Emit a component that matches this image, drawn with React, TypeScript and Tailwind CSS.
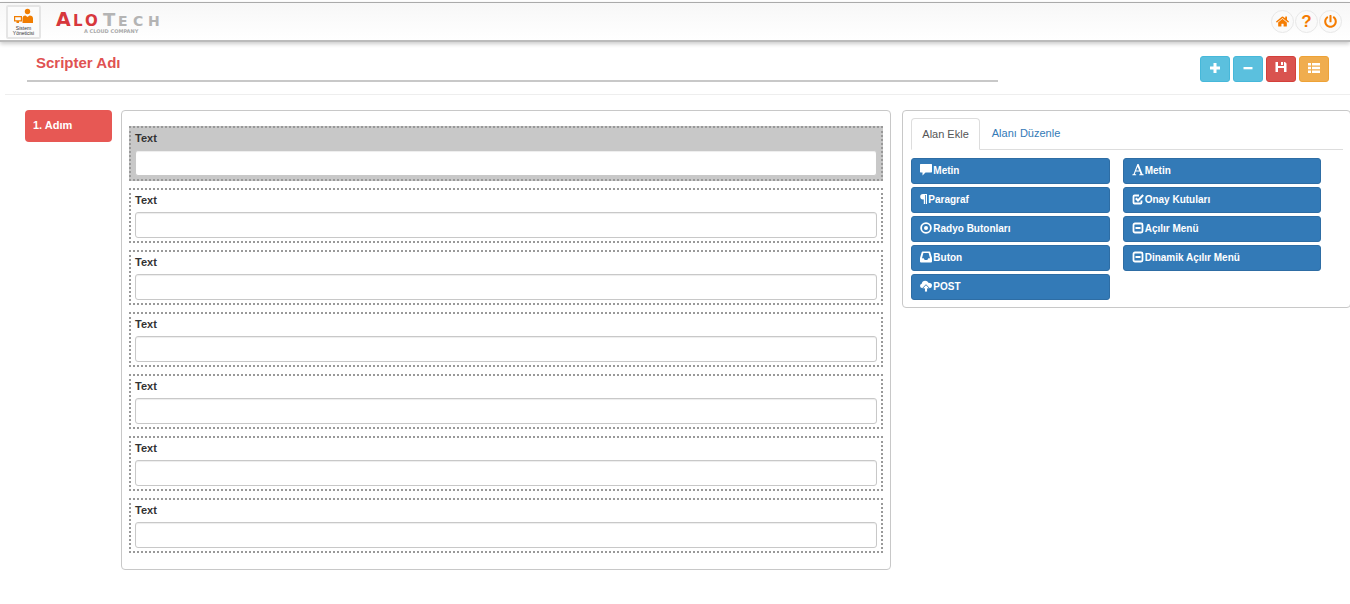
import type { ReactNode } from "react";
import { FaHome, FaPowerOff } from "react-icons/fa";

const fields = ["f1", "f2", "f3", "f4", "f5", "f6", "f7"];

function Icon({ children, className = "h-3 w-3", viewBox = "0 0 12 12" }: { children: ReactNode; className?: string; viewBox?: string }) {
  return (
    <svg viewBox={viewBox} className={`shrink-0 ${className}`} fill="currentColor" aria-hidden="true">
      {children}
    </svg>
  );
}

const CommentIcon = () => (
  <Icon>
    <path d="M.6 0h10.800q.6 0 .6.6v7.200q0 .6-.6.6H5.500L2.500 11.500V8.400H.6Q0 8.400 0 7.800V.6Q0 0 .6 0z" />
  </Icon>
);
const FontIcon = () => (
  <Icon>
    <path d="M5.400 0h1.200l3.900 10 1.200.4v.9H7.200v-.9l1.300-.4-.8-2.400H3.700l-.9 2.400 1.400.4v.9H.3v-.9l1.300-.4zM5.600 2.800 4.100 6.500h3.100z" />
  </Icon>
);
const CheckIcon = () => (
  <Icon>
    <path d="M9.500 7.500v2q0 1-1 1h-6q-1 0-1-1v-6q0-1 1-1h4.500" fill="none" stroke="currentColor" strokeWidth="1.800" />
    <path d="m3.800 5.200 2.200 2.300 5.200-5.500" fill="none" stroke="currentColor" strokeWidth="2" />
  </Icon>
);
const RadioIcon = () => (
  <Icon>
    <circle cx="6" cy="6" r="4.900" fill="none" stroke="currentColor" strokeWidth="1.800" />
    <circle cx="6" cy="6" r="2" />
  </Icon>
);
const CollapseIcon = () => (
  <Icon>
    <rect x="1.500" y="1.500" width="9" height="9" rx="1.500" fill="none" stroke="currentColor" strokeWidth="1.800" />
    <path d="M3.500 5h5v2h-5z" />
  </Icon>
);
const InboxIcon = () => (
  <Icon>
    <path fillRule="evenodd" d="M2.600.5h6.800q.7 0 .9.700L12 7v3.500q0 1-1 1H1q-1 0-1-1V7l1.700-5.800q.2-.7.900-.7zM3.400 2 2 7.200h1.700l1 1.900h2.600l1-1.900H10L8.600 2z" />
  </Icon>
);
const UploadIcon = () => (
  <Icon>
    <path d="M2.600 8.300Q0 8.100 0 6q0-1.800 1.700-2.200Q2.200.8 5.200.8q2.300 0 3.200 2Q12 2.800 12 5.600q0 2.400-2.500 2.700z" />
    <path d="M6 4.700 9.800 8.700H7.500V12h-3V8.700H2.200z" stroke="#337ab7" strokeWidth=".9" />
  </Icon>
);
const ParagraphIcon = () => (
  <Icon viewBox="0 0 7 12" className="h-3 w-[7px]">
    <path d="M3 1h4v10H5.800V2H5v9H3.800V6.500H3Q.2 6.200.2 3.700T3 1z" />
  </Icon>
);

type Item = { label: string; icon: ReactNode };
const leftItems: Item[] = [
  { label: "Metin", icon: <CommentIcon /> },
  { label: "Paragraf", icon: <ParagraphIcon /> },
  { label: "Radyo Butonları", icon: <RadioIcon /> },
  { label: "Buton", icon: <InboxIcon /> },
  { label: "POST", icon: <UploadIcon /> },
];
const rightItems: Item[] = [
  { label: "Metin", icon: <FontIcon /> },
  { label: "Onay Kutuları", icon: <CheckIcon /> },
  { label: "Açılır Menü", icon: <CollapseIcon /> },
  { label: "Dinamik Açılır Menü", icon: <CollapseIcon /> },
];

function ItemColumn({ items }: { items: Item[] }) {
  return (
    <div className="flex flex-1 flex-col gap-[3px]">
      {items.map((item) => (
        <button
          key={item.label}
          type="button"
          className="flex h-[26px] items-center gap-px rounded-[3px] border border-[#2e6da4] bg-[#337ab7] px-2 pb-[2px] text-[10px] font-bold text-white"
        >
          {item.icon}
          {item.label}
        </button>
      ))}
    </div>
  );
}

function RoundLink({ label, children }: { label: string; children: ReactNode }) {
  return (
    <a
      href="#"
      aria-label={label}
      className="flex h-[23px] w-[23px] items-center justify-center rounded-full border border-[#e8e8e8] bg-[#fafafa] text-[#f57c00]"
    >
      {children}
    </a>
  );
}

function Tool({ label, className, children }: { label: string; className: string; children: ReactNode }) {
  return (
    <button
      type="button"
      aria-label={label}
      className={`flex h-[26px] w-[30px] items-center justify-center rounded-[3px] border pb-[2px] text-white ${className}`}
    >
      {children}
    </button>
  );
}

function Brand() {
  return (
    <a href="#" aria-label="AloTech" className="ml-[15px] block">
      <svg viewBox="0 0 110 28" className="h-7 w-[110px] overflow-visible" fontFamily="DejaVu Sans, sans-serif" aria-hidden="true">
        <g fill="#d7373c" fontWeight="bold">
          <text x="0" y="18" fontSize="19">A</text>
          <text x="17" y="18" fontSize="15">L</text>
          <text x="29" y="18" fontSize="15">O</text>
        </g>
        <g fill="#b4b4b4" fontWeight="bold">
          <text x="47" y="18" fontSize="18">T</text>
          <text x="62" y="18" fontSize="14">E</text>
          <text x="77" y="18" fontSize="14">C</text>
          <text x="92" y="18" fontSize="14">H</text>
        </g>
        <text x="28" y="25" fontSize="5" fill="#aaa" fontFamily="DejaVu Sans, sans-serif" fontWeight="bold">A CLOUD COMPANY</text>
      </svg>
    </a>
  );
}

export default function App() {
  return (
    <div className="overflow-x-hidden bg-white pt-[2px] font-['Liberation_Sans',Arial,sans-serif] text-[11px] text-[#333]">
      <header className="flex h-10 items-center border-t border-b-2 border-t-[#aaa] border-b-[#bbb] bg-linear-to-b from-[#f7f7f7] to-white pr-2 pl-[6px] shadow-[0_2px_4px_#ccc]">
        <a
          href="#"
          className="flex h-[34px] w-[35px] flex-col items-center rounded-[2px] border-2 border-[#e5e5e5] bg-[#fbfbfb] pt-px text-center text-[5px] leading-[5px]"
        >
          <svg viewBox="0 0 20 16" className="h-4 w-5 shrink-0" fill="#f07d00" aria-hidden="true">
            <circle cx="13.500" cy="3.500" r="2.700" />
            <path d="M8.500 15v-4.500q0-3 3-3l2 1.500 2-1.500q3.500 0 3.500 3V15z" />
            <path fillRule="evenodd" d="M0 8h8v5.500H5V15H2.500v-1.500H0zM1.200 9.200v3h5.600v-3z" />
          </svg>
          <span className="mt-[2px]">Sistem</span>
          <span>Yöneticisi</span>
        </a>
        <Brand />
        <nav className="ml-auto flex gap-px">
          <RoundLink label="Ana sayfa"><FaHome className="h-[13px] w-[13px]" /></RoundLink>
          <RoundLink label="Yardım"><span className="text-[17px] leading-none font-bold">?</span></RoundLink>
          <RoundLink label="Çıkış"><FaPowerOff className="h-[13px] w-[13px]" /></RoundLink>
        </nav>
      </header>

      <div className="ml-[5px] flex h-[53px] justify-between border-b border-[#eee] pr-[21px] pl-[22px]">
        <input
          aria-label="Scripter Adı"
          defaultValue="Scripter Adı"
          className="h-10 w-[74.6%] border-b-2 border-[#c8c8c8] bg-transparent pt-[3px] pr-2 pl-[9px] text-[15px] font-bold text-[#e05252] outline-none"
        />
        <div className="flex gap-[3px] pt-[14px]">
          <Tool label="Ekle" className="border-[#46b8da] bg-[#5bc0de]">
            <Icon><path d="M4.500 1h3v3.500H11v3H7.500V11h-3V7.500H1v-3h3.500z" /></Icon>
          </Tool>
          <Tool label="Çıkar" className="border-[#46b8da] bg-[#5bc0de]">
            <Icon><path d="M1.500 5h9v2.300h-9z" /></Icon>
          </Tool>
          <Tool label="Kaydet" className="border-[#d43f3a] bg-[#d9534f]">
            <Icon className="mb-[2px] h-3 w-3"><path d="M.5 1H3v4h6V1h1l1.500 1.500V11H9V7H3v4H.5zM6 1h2v3H6z" /></Icon>
          </Tool>
          <Tool label="Liste" className="border-[#eea236] bg-[#f0ad4e]">
            <Icon><path d="M0 1h3v2.600H0zM4 1h8v2.600H4zM0 4.700h3v2.600H0zM4 4.700h8v2.600H4zM0 8.400h3V11H0zM4 8.400h8V11H4z" /></Icon>
          </Tool>
        </div>
      </div>

      <main className="flex items-start pt-[15px] pb-8 pl-[25px]">
        <button type="button" className="h-8 w-[87px] shrink-0 rounded bg-[#e75854] px-2 pb-[2px] text-left text-[11px] font-bold text-white">
          1. Adım
        </button>

        <section className="ml-[9px] flex flex-[636] flex-col gap-[7px] rounded border border-[#c8c8c8] px-[7px] pt-[15px] pb-4">
          {fields.map((id, i) => (
            <div
              key={id}
              className={`h-[55px] border-2 border-dotted border-[#999] px-1 ${i === 0 ? "bg-[#c8c8c8]" : "bg-white"}`}
            >
              <label htmlFor={id} className="block h-[22px] leading-5 font-bold">Text</label>
              <input
                id={id}
                type="text"
                className="block h-[26px] w-full rounded-[3px] border border-[#c8c8c8] bg-white px-2 shadow-[inset_0_1px_1px_rgba(0,0,0,0.075)] outline-none"
              />
            </div>
          ))}
        </section>

        <section className="-mr-px ml-[11px] flex-[364] rounded border border-[#c8c8c8] px-[7px] pt-[7px] pb-[7px] pl-2">
          <div role="tablist" className="flex h-8 border-b border-[#ddd]">
            <button type="button" role="tab" aria-selected="true" className="-mb-px h-8 rounded-t border border-[#ddd] border-b-white bg-white px-[10px] text-[#555]">
              Alan Ekle
            </button>
            <button type="button" role="tab" aria-selected="false" className="px-3 text-[#337ab7]">
              Alanı Düzenle
            </button>
          </div>
          <div className="mt-2 mr-[22px] flex gap-[13px]">
            <ItemColumn items={leftItems} />
            <ItemColumn items={rightItems} />
          </div>
        </section>
      </main>
    </div>
  );
}
